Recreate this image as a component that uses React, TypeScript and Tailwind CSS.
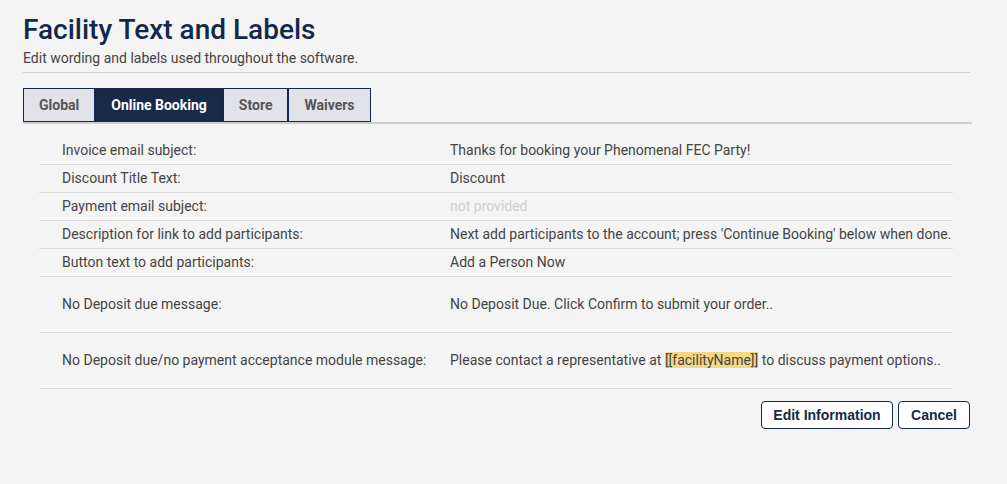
const rows: { label: string; value: React.ReactNode; tall?: boolean; muted?: boolean }[] = [
  { label: "Invoice email subject:", value: "Thanks for booking your Phenomenal FEC Party!" },
  { label: "Discount Title Text:", value: "Discount" },
  { label: "Payment email subject:", value: "not provided", muted: true },
  {
    label: "Description for link to add participants:",
    value: "Next add participants to the account; press 'Continue Booking' below when done.",
  },
  { label: "Button text to add participants:", value: "Add a Person Now" },
  { label: "No Deposit due message:", value: "No Deposit Due. Click Confirm to submit your order..", tall: true },
  {
    label: "No Deposit due/no payment acceptance module message:",
    value: (
      <>
        Please contact a representative at <span className="bg-[#f7d783]">[[facilityName]]</span> to discuss
        payment options..
      </>
    ),
    tall: true,
  },
];

const tabs = ["Global", "Online Booking", "Store", "Waivers"];

export default function App() {
  return (
    <div className="min-h-[484px] bg-[#f4f4f4] pl-[23px] pr-[35px] pt-[13px] font-['Roboto',sans-serif] text-[#444]">
      {/* header */}
      <h1 className="text-[28px] leading-[34px] font-medium text-[#14284b]">Facility Text and Labels</h1>
      <p className="mt-[3px] text-[14px] leading-[17px] text-[#444]">Edit wording and labels used throughout the software.</p>
      <div className="mt-[5px] h-px w-[947px] bg-[#cfcfcf]" />

      {/* tabs */}
      <div className="mt-[15px] flex w-[949px] border-b-2 border-[#cfcfcf]">
        {tabs.map((t) => (
          <div
            key={t}
            className={
              t === "Online Booking"
                ? "flex h-[34px] items-center border border-[#14284b] bg-[#172a4a] px-[15px] text-[14px] font-bold text-white"
                : "flex h-[34px] items-center border border-[#14284b] bg-[#e2e3e8] px-[15px] text-[14px] font-bold text-[#555]"
            }
          >
            {t}
          </div>
        ))}
      </div>

      {/* rows */}
      <div className="mt-[13px] ml-[16px] w-[914px]">
        {rows.map((r) => (
          <div
            key={r.label}
            className={
              r.tall
                ? "flex h-[56px] items-center border-b border-[#dcdcdc] text-[14px]"
                : "flex h-[28px] items-center border-b border-[#dcdcdc] text-[14px]"
            }
          >
            <div className="w-[411px] shrink-0 pl-[23px]">{r.label}</div>
            <div className={r.muted ? "text-[#cfcfcf]" : "text-[#444]"}>{r.value}</div>
          </div>
        ))}
      </div>

      {/* actions */}
      <div className="mt-[12px] flex w-[947px] justify-end gap-[5px] font-['Liberation_Sans',Arial,sans-serif]">
        <button className="h-[28px] w-[132px] rounded-[4px] border border-[#14284b] bg-white text-[14px] font-bold text-[#14284b]">
          Edit Information
        </button>
        <button className="h-[28px] w-[72px] rounded-[4px] border border-[#14284b] bg-white text-[14px] font-bold text-[#14284b]">
          Cancel
        </button>
      </div>
    </div>
  );
}
